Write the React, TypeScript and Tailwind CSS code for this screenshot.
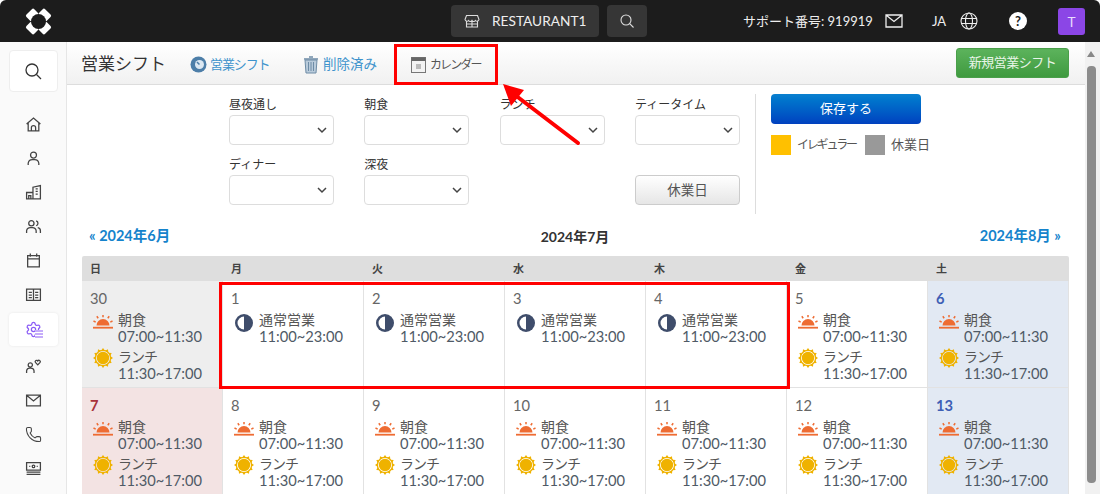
import { Phone, Settings } from "lucide-react"

const FONT = "font-['Lato','Noto_Sans_CJK_JP',sans-serif]"

function Glyph({ d }: { d: string }) {
  return (
    <svg width="17" height="17" viewBox="0 0 16 16" fill="none" stroke="#444" strokeWidth="1.2">
      <path d={d} />
    </svg>
  )
}

const NAV = [
  "M1.5 7.5 8 2l6.5 5.500M3 6.500V14h10V6.500M6 14v-3a2 2 0 0 1 4 0v3",
  "M8 2a2.800 2.800 0 1 0 0 5.600A2.800 2.800 0 0 0 8 2zM3 14v-1.500a4 4 0 0 1 4-3.500h2a4 4 0 0 1 4 3.500V14",
  "M1.500 14V8h6v6zM7.500 8V3l7-1.500V14h-7M3.500 14v-3h2v3M10 4.500h2M10 7h2M10 9.500h2",
  "M6 2.500a2.500 2.500 0 1 0 0 5 2.500 2.500 0 0 0 0-5zM1.500 14v-2a3.500 3.500 0 0 1 3.500-3h2a3.500 3.500 0 0 1 3.500 3v2M10.500 2.700a2.400 2.400 0 0 1 0 4.600M12 9a3 3 0 0 1 2.500 3v2",
  "M2.500 3.500h11V14h-11zM2.500 6.500h11M5 1.500v3M11 1.500v3",
  "M1.500 3h13v10.500h-13zM8 3v10.500M3.500 6h3M3.500 8.500h3M3.500 11h3M9.500 6h3M9.500 8.500h3M9.500 11h3",
]
const USER_HEART = "M1.500 14v-2a3 3 0 0 1 3-2.500h1a3 3 0 0 1 3 2.500v2M5 4.500a2 2 0 1 0 0 4 2 2 0 0 0 0-4zM12 6.500 9.800 4.200a1.300 1.300 0 0 1 2.200-1.400 1.300 1.300 0 0 1 2.200 1.400z"
const MAIL = "M1.500 3h13v10h-13zM1.500 3 8 8.500 14.500 3"
const CASH = "M1.500 2.500h13v7h-13zM4 6h1M11 6h1M1.500 11.500h13M1.500 13.500h13M8 4.800a1.200 1.200 0 1 0 0 2.400 1.200 1.200 0 0 0 0-2.400z"

function Sunrise() {
  return (
    <svg width="20" height="14" viewBox="0 0 20 14" className="shrink-0 mt-[4px]">
      <path d="M3.500 10.500a6.500 6.500 0 0 1 13 0z" fill="#ee6c33" />
      <path d="M0 12.700h20" stroke="#ee6c33" strokeWidth="1.800" />
      <path d="M10 0v2.200M3.800 1.300l1.400 2M16.200 1.300l-1.400 2M.5 6l2.200 1.100M19.500 6l-2.200 1.100" stroke="#ee6c33" strokeWidth="1.500" />
    </svg>
  )
}

function Sun() {
  return (
    <svg width="20" height="20" viewBox="0 0 20 20" className="shrink-0">
      <circle cx="10" cy="10" r="6.200" fill="#efb200" />
      <circle cx="10" cy="10" r="7.600" fill="none" stroke="#efb200" strokeWidth="1.200" />
      {[0, 30, 60, 90, 120, 150, 180, 210, 240, 270, 300, 330].map((a) => (
        <path key={a} d="M10 0 12 2.800H8z" fill="#efb200" transform={`rotate(${a} 10 10)`} />
      ))}
    </svg>
  )
}

function HalfMoon() {
  return (
    <svg width="18" height="18" viewBox="0 0 18 18" className="shrink-0 mt-[3px]">
      <circle cx="9" cy="9" r="9" fill="#3f4d6b" />
      <path d="M9 2.500a6.500 6.500 0 0 0 0 13z" fill="#fff" />
    </svg>
  )
}

function Select({ label }: { label: string }) {
  return (
    <div className="w-[105px]">
      <div className="text-[12px] leading-[15px] h-[18px] text-[#333]">{label}</div>
      <div className="h-[30px] bg-white border border-[#ddd] rounded-[4px] flex items-center justify-end pr-[6px]">
        <svg width="10" height="7" viewBox="0 0 10 7" fill="none" stroke="#444" strokeWidth="1.500"><path d="M1 1l4 4 4-4" /></svg>
      </div>
    </div>
  )
}

function Shift({ kind, name, time, tight }: { kind: "am" | "noon" | "all"; name: string; time: string; tight?: boolean }) {
  return (
    <div className="flex items-start pl-[3px]">
      <div className="w-[20px] mr-[5px] flex justify-center">
        {kind === "am" ? <Sunrise /> : kind === "noon" ? <Sun /> : <HalfMoon />}
      </div>
      <div className="leading-[17.5px] text-[#555] whitespace-nowrap">
        <div className={`text-[14px] ${tight ? "tracking-[-1px]" : ""}`}>{name}</div>
        <div className="text-[14.7px] text-[#4f5a66]">{time}</div>
      </div>
    </div>
  )
}

function Day({ n, tint, num, regular }: { n: number; tint?: string; num?: string; regular?: boolean }) {
  return (
    <div className={`h-[107px] border-r border-b border-[#e2e2e2] px-[8px] pt-[9px] ${tint ?? "bg-white"}`}>
      <div className={`text-[14.7px] leading-[16px] mb-[4.5px] ${num ?? "text-[#666]"}`}>{n}</div>
      {regular ? (
        <Shift kind="all" name="通常営業" time="11:00~23:00" />
      ) : (
        <div className="flex flex-col gap-[2px]">
          <Shift kind="am" name="朝食" time="07:00~11:30" />
          <Shift kind="noon" name="ランチ" time="11:30~17:00" tight />
        </div>
      )}
    </div>
  )
}

export default function App() {
  return (
    <div className={`${FONT} w-[1100px] h-[494px] relative overflow-hidden bg-white flex flex-col`}>
      <header className="h-[42px] shrink-0 bg-[#1c1c1c] rounded-t-[6px] flex items-center text-[#eee] text-[13.7px]">
        <svg className="ml-[25px]" width="27" height="27" viewBox="0 0 28 28" fill="#fff">
          <rect x="1.750" y="2.750" width="11.500" height="9" rx="1.800" transform="rotate(-45 7.500 7.250)" />
          <rect x="14.750" y="2.750" width="11.500" height="9" rx="1.800" transform="rotate(45 20.500 7.250)" />
          <rect x="1.750" y="16.250" width="11.500" height="9" rx="1.800" transform="rotate(45 7.500 20.750)" />
          <rect x="14.750" y="16.250" width="11.500" height="9" rx="1.800" transform="rotate(-45 20.500 20.750)" />
          <circle cx="14" cy="14" r="7.800" fill="#1c1c1c" />
        </svg>
        <div className="ml-[399px] w-[148px] h-[32px] bg-[#363636] rounded-[4px] flex items-center pl-[13px] gap-[12px]">
          <svg width="16" height="16" viewBox="0 0 16 16" fill="none" stroke="#ddd" strokeWidth="1.100"><path d="M2.500 2.500h11l1.500 4a2 2 0 0 1-3.500 1 2 2 0 0 1-3.500 0 2 2 0 0 1-3.500 0 2 2 0 0 1-3.500-1zM2.500 8v6h11V8M2.500 11h11M8 8v6" /></svg>
          <span className="pt-[1px]">RESTAURANT1</span>
        </div>
        <div className="ml-[8px] w-[40px] h-[32px] bg-[#363636] rounded-[4px] flex items-center justify-center">
          <svg width="16" height="16" viewBox="0 0 16 16" fill="none" stroke="#ddd" strokeWidth="1.100"><circle cx="7" cy="7" r="5" /><path d="M10.700 10.700 14.500 14.500" /></svg>
        </div>
        <span className="ml-[96px] w-[128px] whitespace-nowrap text-[13px] pt-[2px]">サポート番号: 919919</span>
        <svg className="ml-[14px]" width="18" height="14" viewBox="0 0 18 14" fill="none" stroke="#eee" strokeWidth="1.300"><path d="M1 1h16v12H1zM1 1l8 6.500L17 1" /></svg>
        <span className="ml-[29px] w-[16px] text-[13px] pt-[2px]">JA</span>
        <svg className="ml-[12px]" width="18" height="18" viewBox="0 0 18 18" fill="none" stroke="#eee" strokeWidth="1.100"><circle cx="9" cy="9" r="8" /><ellipse cx="9" cy="9" rx="3.500" ry="8" /><path d="M1 6.500h16M1 11.500h16" /></svg>
        <div className="ml-[31px] w-[18px] h-[18px] bg-white rounded-full text-[#1c1c1c] font-bold text-[13px] leading-[18px] text-center">?</div>
        <div className="ml-[31px] w-[27px] h-[27px] bg-[#8b46e6] rounded-[3px] text-center leading-[27px] text-[#e9dcff]">T</div>
      </header>

      <div className="flex flex-1 min-h-0">
        <aside className="w-[67px] shrink-0 bg-[#fafafa] border-r border-[#e6e6e6] flex flex-col items-center">
          <div className="mt-[8px] w-[49px] h-[42px] bg-white border border-[#eee] rounded-[4px] flex items-center justify-center">
            <svg width="18" height="18" viewBox="0 0 18 18" fill="none" stroke="#333" strokeWidth="1.300"><circle cx="8" cy="8" r="6" /><path d="M12.500 12.500 17 17" /></svg>
          </div>
          <div className="mt-[24px] flex flex-col items-center gap-[17px]">
            {NAV.map((d) => <Glyph key={d} d={d} />)}
          </div>
          <div className="relative mt-[10px] w-[49px] h-[33px] bg-white rounded-[4px] shadow-[0_0_3px_rgba(0,0,0,0.08)] flex items-center justify-center">
            <Settings size={17} color="#8b5cf6" strokeWidth={1.800} />
            <svg className="absolute left-[26px] top-[17px] bg-white" width="8" height="8" viewBox="0 0 8 8" stroke="#8b5cf6" strokeWidth="1.200"><path d="M0 1h8M0 4h8M0 7h8" /></svg>
          </div>
          <div className="mt-[12px] flex flex-col items-center gap-[17px]">
            <Glyph d={USER_HEART} />
            <Glyph d={MAIL} />
            <Phone size={17} color="#444" strokeWidth={1.500} />
            <Glyph d={CASH} />
          </div>
        </aside>

        <main className="flex-1 min-w-0 flex flex-col">
          <div className="h-[43px] shrink-0 bg-gradient-to-b from-white to-[#f1f1f1] border-b border-[#ddd] flex items-center pl-[14px] pr-[16px]">
            <h1 className="text-[17px] text-[#333] w-[109px] pt-[1px]">営業シフト</h1>
            <div className="flex items-center gap-[3px] w-[113px] text-[13px] tracking-[-1.100px] text-[#3d93cc] pt-[3px]">
              <svg width="17" height="17" viewBox="0 0 17 17"><circle cx="8.500" cy="8.500" r="8" fill="#4d7ea8" /><circle cx="9.500" cy="8.500" r="4.500" fill="#dce8f2" /><path d="M9.500 8.500 7 6" stroke="#4d7ea8" strokeWidth="1.500" /></svg>
              <span>営業シフト</span>
            </div>
            <div className="flex items-center gap-[4px] w-[108px] text-[13.500px] text-[#3d93cc] pt-[3px]">
              <svg width="16" height="18" viewBox="0 0 16 18"><path d="M2 4h12l-1 13H3z" fill="#b9cbdb" stroke="#6e8ca6" /><path d="M1 3h14M6 1h4" stroke="#6e8ca6" strokeWidth="1.500" /><path d="M5.500 6v9M8 6v9M10.500 6v9" stroke="#6e8ca6" /></svg>
              <span>削除済み</span>
            </div>
            <div className="flex items-center gap-[4px] text-[12px] tracking-[-1.900px] text-[#555] pt-[3px]">
              <svg width="15" height="16" viewBox="0 0 15 16"><rect x=".5" y=".5" width="14" height="15" fill="#f3f3f3" stroke="#777" /><rect x=".5" y=".5" width="14" height="3.500" fill="#666" /><rect x="5" y="7" width="5" height="5" fill="#bbb" /></svg>
              <span>カレンダー</span>
            </div>
            <button className="ml-auto w-[113px] h-[30px] rounded-[3px] bg-gradient-to-b from-[#5cb35c] to-[#3f9a3f] border border-[#4a9f4a] text-[13px] tracking-[-0.5px] text-[#e8f5e8]">新規営業シフト</button>
          </div>

          <div className="flex pl-[162px] pt-[12px] h-[131px] shrink-0">
            <div className="grid grid-cols-[105px_105px_105px_105px] gap-x-[30.300px] gap-y-[12px] content-start w-[511px] h-[120px]">
              <Select label="昼夜通し" />
              <Select label="朝食" />
              <Select label="ランチ" />
              <Select label="ティータイム" />
              <Select label="ディナー" />
              <Select label="深夜" />
              <div />
              <div className="pt-[18px]">
                <button className="w-[105px] h-[30px] rounded-[4px] border border-[#ccc] bg-gradient-to-b from-white to-[#e6e6e6] text-[13.500px] text-[#555]">休業日</button>
              </div>
            </div>
            <div className="ml-[15px] -mt-[3px] h-[120px] border-l border-[#ddd] pl-[15px]">
              <button className="block w-[150px] h-[30px] rounded-[4px] bg-gradient-to-b from-[#0a80cf] to-[#0040bf] text-[13px] text-white">保存する</button>
              <div className="mt-[11px] flex items-center text-[13px] text-[#555]">
                <span className="w-[20px] h-[20px] bg-[#ffc000]" />
                <span className="ml-[6px] w-[58px] whitespace-nowrap text-[12px] tracking-[-2.200px]">イレギュラー</span>
                <span className="ml-[10px] w-[20px] h-[20px] bg-[#999]" />
                <span className="ml-[6px]">休業日</span>
              </div>
            </div>
          </div>

          <div className="ml-[15px] mr-[16px]">
            <div className="h-[40px] flex items-center justify-between pl-[7px] pr-[8px] text-[14.500px] font-bold text-[#1583cc]">
              <span>« 2024年6月</span>
              <span className="text-[14px] text-[#333]">2024年7月</span>
              <span>2024年8月 »</span>
            </div>
            <div className="grid grid-cols-7 h-[25px] bg-[#dedede] rounded-t-[2px] text-[11px] font-bold text-[#444] leading-[25px]">
              {["日", "月", "火", "水", "木", "金", "土"].map((w) => <div key={w} className="pl-[8px]">{w}</div>)}
            </div>
            <div className="grid grid-cols-7">
              <Day n={30} tint="bg-[#eeeeee]" />
              {[1, 2, 3, 4].map((n) => <Day key={n} n={n} regular />)}
              <Day n={5} />
              <Day n={6} tint="bg-[#e2e9f3]" num="font-bold text-[#3e5fb5]" />
              <Day n={7} tint="bg-[#f3e3e3]" num="font-bold text-[#a8323a]" />
              {[8, 9, 10, 11, 12].map((n) => <Day key={n} n={n} />)}
              <Day n={13} tint="bg-[#e2e9f3]" num="font-bold text-[#3e5fb5]" />
            </div>
          </div>
        </main>

        <div className="w-[15px] shrink-0 bg-[#f1f1f1] flex flex-col pl-[2px]">
          <div className="mt-[9px] w-0 h-0 border-x-[4.5px] border-x-transparent border-b-[6px] border-b-[#888]" />
          <div className="mt-[9px] w-[9px] h-[417px] rounded-[4px] bg-[#8c8c8c]" />
        </div>
      </div>

      {/* annotations */}
      <div className="absolute left-[394px] top-[44px] w-[104px] h-[41px] border-[3px] border-[#f00]" />
      <div className="absolute left-[219px] top-[282px] w-[571px] h-[107px] border-[3px] border-[#f00]" />
      <svg className="absolute left-[495px] top-[78px]" width="90" height="72" viewBox="0 0 90 72">
        <path d="M83 65 20 17" stroke="#f00" strokeWidth="4" strokeLinecap="round" />
        <path d="M8 6 29 12 16 28z" fill="#f00" />
      </svg>
    </div>
  )
}
